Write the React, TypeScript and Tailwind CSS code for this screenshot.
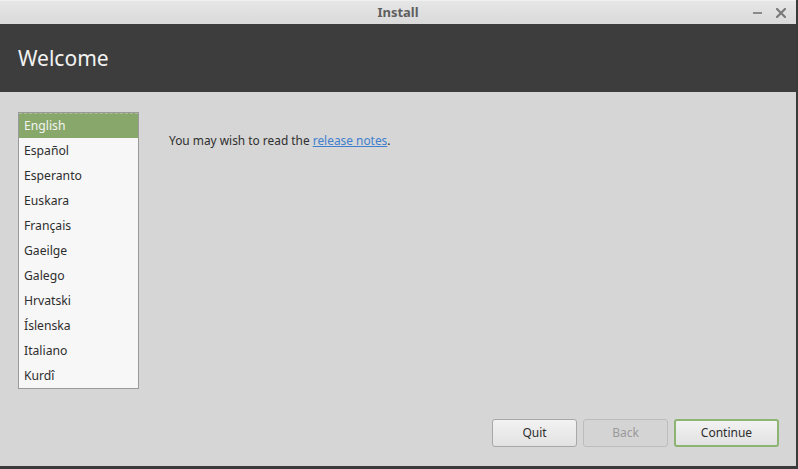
export default function App() {
  const langs = ["English", "Español", "Esperanto", "Euskara", "Français", "Gaeilge", "Galego", "Hrvatski", "Íslenska", "Italiano", "Kurdî"]

  return (
    <div className="w-[798px] h-[469px] bg-[#3a3a3a] overflow-hidden" style={{ fontFamily: '"Noto Sans", "DejaVu Sans", sans-serif' }}>
      <div className="w-[796px] h-[466px] flex flex-col bg-[#d6d6d6]">
        {/* title bar */}
        <div className="h-[24px] flex items-center relative bg-gradient-to-b from-[#e6e6e6] to-[#dadada] border-t border-[#f0f0f0]">
          <div className="flex-1 text-center text-[13px] font-bold text-[#5f5f5f]">Install</div>
          <div className="absolute right-[10px] top-0 h-full flex items-center gap-[14px]">
            <div className="w-[9px] h-[2px] bg-[#8a8a8a]" />
            <svg width="10" height="10" viewBox="0 0 10 10">
              <path d="M1 1 L9 9 M9 1 L1 9" stroke="#7a7a7a" strokeWidth="2.2" strokeLinecap="square" />
            </svg>
          </div>
        </div>

        {/* header */}
        <div className="h-[68px] bg-[#3d3d3d] flex items-center pl-[18px]">
          <span className="text-[21px] text-[#f2f2f2] leading-none">Welcome</span>
        </div>

        {/* content */}
        <div className="flex-1 flex flex-col pl-[18px] pr-[17px] pt-[20px] pb-[19px]">
          <div className="flex flex-1">
            <div className="w-[121px] h-[277px] border border-[#9a9a9a] bg-[#f7f7f7] overflow-hidden">
              {langs.map((l, i) => (
                <div
                  key={l}
                  className={
                    i === 0
                      ? "h-[25px] flex items-center pl-[5px] pt-[1px] text-[12.2px] bg-[#87a86a] text-[#f4f4f4] border-t border-dashed border-[#a9bf95]"
                      : "h-[25px] flex items-center pl-[5px] pt-[2px] text-[12.2px] text-[#2e2e2e]"
                  }
                >
                  {l}
                </div>
              ))}
              <div className="border-t border-dashed border-[#c4c4c4] mt-[1px]" />
            </div>
            <div className="pl-[30px] pt-[23px] text-[11.9px] text-[#2f2f2f] leading-none">
              You may wish to read the <span className="text-[#3f7fce] underline">release notes</span>.
            </div>
          </div>

          <div className="flex justify-end gap-[6px]">
            <button className="w-[85px] h-[28px] rounded-[3px] border border-[#a8a8a8] bg-gradient-to-b from-[#f2f2f2] to-[#e2e2e2] text-[12px] text-[#2e2e2e]">Quit</button>
            <button className="w-[85px] h-[28px] rounded-[3px] border border-[#bcbcbc] bg-[#d4d4d4] text-[12px] text-[#9a9a9a]">Back</button>
            <button className="w-[105px] h-[28px] rounded-[3px] border-2 border-[#8db473] bg-gradient-to-b from-[#f2f2f2] to-[#e2e2e2] text-[12px] text-[#2e2e2e]">Continue</button>
          </div>
        </div>
      </div>
    </div>
  )
}
